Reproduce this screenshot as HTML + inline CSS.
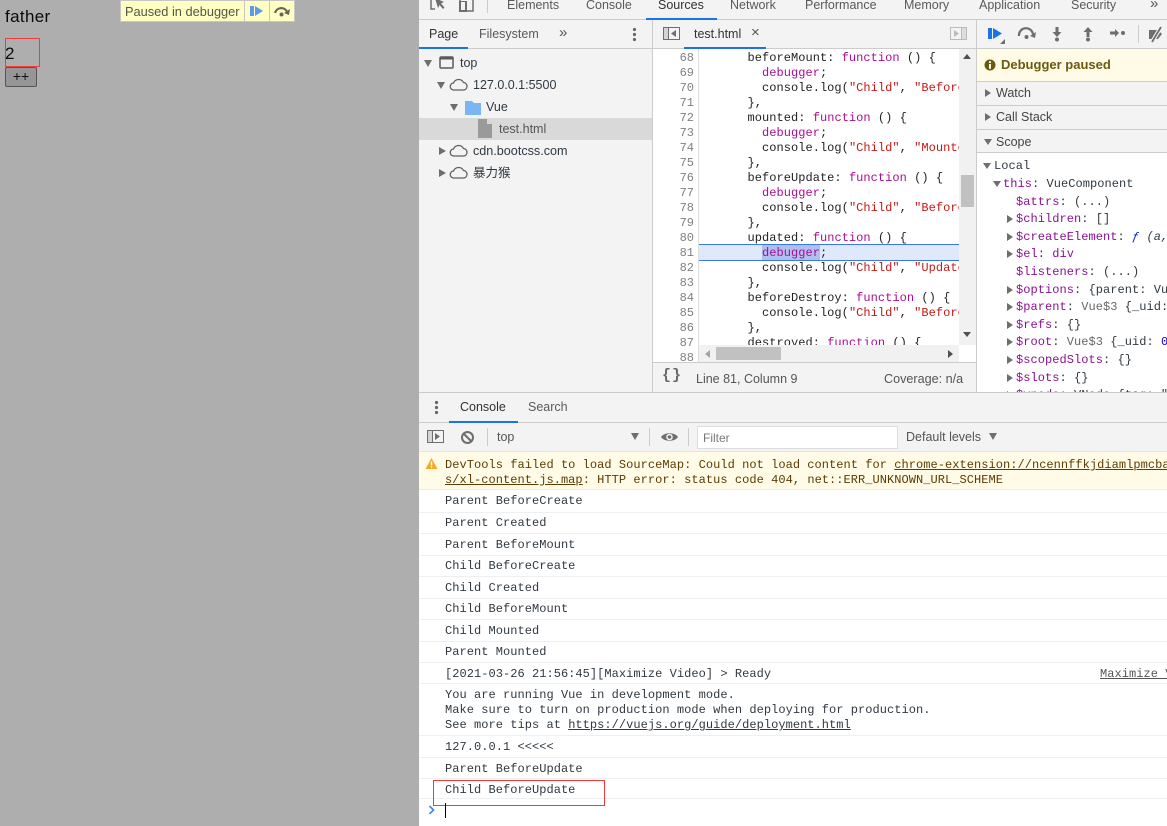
<!DOCTYPE html>
<html><head><meta charset="utf-8">
<style>
html,body{margin:0;padding:0;width:1167px;height:826px;overflow:hidden;background:#fff}
body{position:relative;font-family:"Liberation Sans","Noto Sans CJK SC",sans-serif;font-size:12px;color:#303942}
.a{position:absolute}
.t{position:absolute;white-space:pre;line-height:16px;height:16px}
.m{font-family:"Liberation Mono",monospace;font-size:12px}
.tab{color:#5a5a5a;font-size:12.5px}
.k{color:#aa0d91}.s{color:#c41a16}.p{color:#881391}
.ln{position:absolute;left:653px;width:41px;text-align:right;color:#808080;font-family:"Liberation Mono",monospace;line-height:15px;height:15px}
.c{position:absolute;left:704px;white-space:pre;font-family:"Liberation Mono",monospace;line-height:15px;height:15px;color:#222;letter-spacing:.045px}
.r{position:absolute;left:445px;white-space:pre;font-family:"Liberation Mono",monospace;line-height:16px;color:#303942;letter-spacing:.045px}
.b{position:absolute;left:419px;width:748px;height:1px;background:#efefef}
.ar{position:absolute;width:0;height:0;border-left:4px solid transparent;border-right:4px solid transparent;border-top:7px solid #6e6e6e}
.ac{position:absolute;width:0;height:0;border-top:4px solid transparent;border-bottom:4px solid transparent;border-left:7px solid #6e6e6e}
.v{position:absolute;white-space:pre;font-family:"Liberation Mono",monospace;line-height:16px;color:#303942;letter-spacing:.045px}
u{text-decoration:underline}
</style></head><body>

<!-- page -->
<div class="a" style="left:0;top:0;width:419px;height:826px;background:#aeaeae"></div>
<div class="t" style="left:5px;top:6px;height:22px;line-height:22px;font-size:17px;letter-spacing:.35px;color:#0a0a0a">father</div>
<div class="a" style="left:5px;top:38px;width:33px;height:27px;border:1px solid #f23b3b"></div>
<div class="t" style="left:5px;top:43px;height:22px;line-height:22px;font-size:17px;color:#0a0a0a">2</div>
<div class="a" style="left:5px;top:67px;width:30px;height:18px;border:1px solid #555;border-radius:2px;background:#969696;text-align:center;line-height:17px;font-size:14px;color:#111">++</div>

<div class="a" style="left:120px;top:0;width:175px;height:22px;background:#c6c6c6"></div>
<div class="a" style="left:121px;top:1px;width:123px;height:20px;background:#ffffc4"></div>
<div class="a" style="left:245px;top:1px;width:24px;height:20px;background:#ffffc4"></div>
<div class="a" style="left:270px;top:1px;width:24px;height:20px;background:#ffffc4"></div>
<div class="t" style="left:125px;top:4px;font-size:12.8px;color:#555544">Paused in debugger</div>
<svg class="a" style="left:249px;top:5px" width="16" height="12"><rect x="1" y="1" width="4" height="10" fill="#5c9be8"/><path d="M6 1l8 5-8 5z" fill="#5c9be8"/></svg>
<svg class="a" style="left:273px;top:5px" width="18" height="12"><path d="M2 8a6.500 6.500 0 0 1 12-1.500" fill="none" stroke="#66665a" stroke-width="2.200"/><path d="M17 4l-1 6-5-2z" fill="#66665a"/><circle cx="8.500" cy="9.500" r="2" fill="#66665a"/></svg>

<!-- devtools bg -->
<div class="a" style="left:419px;top:0;width:748px;height:392px;background:#f3f3f3"></div>

<!-- top tabs -->
<div class="a" style="left:419px;top:19px;width:748px;height:1px;background:#ccc"></div>
<svg class="a" style="left:430px;top:0" width="46" height="14"><path d="M1 0v9h4" fill="none" stroke="#6e6e6e" stroke-width="1.500"/><path d="M6 0l3 10 1.500-3 3.500 4 1.500-1.500-3.500-4 3-1.500z" fill="#6e6e6e" transform="translate(-1,-2)"/><rect x="30" y="-3" width="13" height="14" fill="none" stroke="#6e6e6e" stroke-width="1.500"/><rect x="29" y="1" width="8" height="11" fill="#6e6e6e"/><rect x="31" y="2" width="4" height="8" fill="#f3f3f3"/></svg>
<div class="a" style="left:487px;top:0;width:1px;height:13px;background:#ccc"></div>
<div class="t tab" style="left:507px;top:-3px">Elements</div>
<div class="t tab" style="left:586px;top:-3px">Console</div>
<div class="t tab" style="left:658px;top:-3px;color:#333">Sources</div>
<div class="t tab" style="left:730px;top:-3px">Network</div>
<div class="t tab" style="left:805px;top:-3px">Performance</div>
<div class="t tab" style="left:904px;top:-3px">Memory</div>
<div class="t tab" style="left:979px;top:-3px">Application</div>
<div class="t tab" style="left:1071px;top:-3px">Security</div>
<div class="t" style="left:1150px;top:-4px;font-size:15px;color:#555">»</div>
<div class="a" style="left:646px;top:18px;width:71px;height:2px;background:#1a73e8"></div>

<!-- navigator -->
<div class="a" style="left:419px;top:48px;width:748px;height:1px;background:#ccc"></div>
<div class="t tab" style="left:429px;top:26px;color:#333">Page</div>
<div class="t tab" style="left:479px;top:26px">Filesystem</div>
<div class="t" style="left:559px;top:25px;font-size:15px;color:#555">»</div>
<div class="a" style="left:419px;top:47px;width:49px;height:2px;background:#1a73e8"></div>
<svg class="a" style="left:632px;top:27px" width="5" height="15"><circle cx="2.500" cy="2.500" r="1.600" fill="#666"/><circle cx="2.500" cy="7.500" r="1.600" fill="#666"/><circle cx="2.500" cy="12.500" r="1.600" fill="#666"/></svg>

<div class="a" style="left:419px;top:118px;width:233px;height:22px;background:#d9d9d9"></div>
<div class="ar" style="left:424px;top:60px"></div>
<svg class="a" style="left:439px;top:55px" width="16" height="15"><rect x="1" y="2" width="13" height="11" rx="1" fill="none" stroke="#5a5a5a" stroke-width="1.500"/><rect x="1" y="2" width="13" height="2.500" fill="#5a5a5a"/></svg>
<div class="t" style="left:460px;top:55px;font-size:12.500px">top</div>
<div class="ar" style="left:437px;top:82px"></div>
<svg class="a" style="left:449px;top:77px" width="20" height="14"><path d="M5 13a3.500 3.500 0 0 1-.5-7A5.500 5.500 0 0 1 14.500 5.500 3.800 3.800 0 0 1 15 13z" fill="none" stroke="#5f5f5f" stroke-width="1.300"/></svg>
<div class="t" style="left:473px;top:77px;font-size:12.500px">127.0.0.1:5500</div>
<div class="ar" style="left:450px;top:104px"></div>
<svg class="a" style="left:465px;top:100px" width="17" height="15"><path d="M0 1h7l2 2h7v12H0z" fill="#7ab6f4"/></svg>
<div class="t" style="left:486px;top:99px;font-size:12.500px">Vue</div>
<svg class="a" style="left:478px;top:119px" width="14" height="19"><path d="M0 0h9l5 5v14H0z" fill="#9a9a9a"/><path d="M9 0l5 5H9z" fill="#d9d9d9"/></svg>
<div class="t" style="left:499px;top:121px;font-size:12.500px;color:#555">test.html</div>
<div class="ac" style="left:439px;top:147px"></div>
<svg class="a" style="left:449px;top:143px" width="20" height="14"><path d="M5 13a3.500 3.500 0 0 1-.5-7A5.500 5.500 0 0 1 14.500 5.500 3.800 3.800 0 0 1 15 13z" fill="none" stroke="#5f5f5f" stroke-width="1.300"/></svg>
<div class="t" style="left:473px;top:143px;font-size:12.600px">cdn.bootcss.com</div>
<div class="ac" style="left:439px;top:169px"></div>
<svg class="a" style="left:449px;top:165px" width="20" height="14"><path d="M5 13a3.500 3.500 0 0 1-.5-7A5.500 5.500 0 0 1 14.500 5.500 3.800 3.800 0 0 1 15 13z" fill="none" stroke="#5f5f5f" stroke-width="1.300"/></svg>
<div class="t" style="left:473px;top:165px;font-size:12.500px">暴力猴</div>

<!-- editor -->
<div class="a" style="left:652px;top:20px;width:1px;height:372px;background:#ccc"></div>
<svg class="a" style="left:663px;top:26px" width="18" height="15"><rect x=".5" y="1.500" width="16" height="12" fill="none" stroke="#6e6e6e"/><rect x="1" y="2" width="4" height="11" fill="#d5d5d5"/><path d="M5.500 1v13" stroke="#6e6e6e"/><path d="M13 4v7L8 7.500z" fill="#6e6e6e"/></svg>
<div class="t tab" style="left:694px;top:26px;color:#333">test.html</div>
<div class="t" style="left:751px;top:25px;font-size:15px;color:#555">×</div>
<div class="a" style="left:684px;top:47px;width:82px;height:2px;background:#1a73e8"></div>
<svg class="a" style="left:950px;top:26px" width="18" height="15"><rect x=".5" y="1.500" width="16" height="12" fill="none" stroke="#bbb"/><rect x="12" y="2" width="4" height="11" fill="#ddd"/><path d="M11.500 1v13" stroke="#bbb"/><path d="M4 4v7l5-3.500z" fill="#bbb"/></svg>

<div class="a" style="left:653px;top:49px;width:45px;height:313px;background:#fff;border-right:1px solid #ddd"></div>
<div class="a" style="left:699px;top:49px;width:260px;height:313px;background:#fff"></div>

<div class="a" style="left:699px;top:244px;width:260px;height:17px;background:#e0e8fb;box-sizing:border-box;border-top:1px solid #3b78e7;border-bottom:1px solid #3b78e7"></div>
<div class="a" style="left:762px;top:245px;width:58px;height:15px;background:#aebff0"></div>

<div class="ln" style="top:51px">68</div><div class="ln" style="top:66px">69</div><div class="ln" style="top:81px">70</div><div class="ln" style="top:96px">71</div><div class="ln" style="top:111px">72</div><div class="ln" style="top:126px">73</div><div class="ln" style="top:141px">74</div><div class="ln" style="top:156px">75</div><div class="ln" style="top:171px">76</div><div class="ln" style="top:186px">77</div><div class="ln" style="top:201px">78</div><div class="ln" style="top:216px">79</div><div class="ln" style="top:231px">80</div><div class="ln" style="top:246px">81</div><div class="ln" style="top:261px">82</div><div class="ln" style="top:276px">83</div><div class="ln" style="top:291px">84</div><div class="ln" style="top:306px">85</div><div class="ln" style="top:321px">86</div><div class="ln" style="top:336px">87</div><div class="ln" style="top:351px">88</div>

<div class="a" style="left:700px;top:49px;width:259px;height:296px;overflow:hidden">
<div class="c" style="left:4px;top:-13px">      },</div>
<div class="c" style="left:4px;top:2px">      beforeMount: <span class="k">function</span> () {</div>
<div class="c" style="left:4px;top:17px">        <span class="k">debugger</span>;</div>
<div class="c" style="left:4px;top:32px">        console.log(<span class="s">"Child"</span>, <span class="s">"BeforeMount"</span>);</div>
<div class="c" style="left:4px;top:47px">      },</div>
<div class="c" style="left:4px;top:62px">      mounted: <span class="k">function</span> () {</div>
<div class="c" style="left:4px;top:77px">        <span class="k">debugger</span>;</div>
<div class="c" style="left:4px;top:92px">        console.log(<span class="s">"Child"</span>, <span class="s">"Mounted"</span>);</div>
<div class="c" style="left:4px;top:107px">      },</div>
<div class="c" style="left:4px;top:122px">      beforeUpdate: <span class="k">function</span> () {</div>
<div class="c" style="left:4px;top:137px">        <span class="k">debugger</span>;</div>
<div class="c" style="left:4px;top:152px">        console.log(<span class="s">"Child"</span>, <span class="s">"BeforeUpdate"</span>);</div>
<div class="c" style="left:4px;top:167px">      },</div>
<div class="c" style="left:4px;top:182px">      updated: <span class="k">function</span> () {</div>
<div class="c" style="left:4px;top:197px">        <span class="k">debugger</span>;</div>
<div class="c" style="left:4px;top:212px">        console.log(<span class="s">"Child"</span>, <span class="s">"Updated"</span>);</div>
<div class="c" style="left:4px;top:227px">      },</div>
<div class="c" style="left:4px;top:242px">      beforeDestroy: <span class="k">function</span> () {</div>
<div class="c" style="left:4px;top:257px">        console.log(<span class="s">"Child"</span>, <span class="s">"BeforeDestroy"</span>);</div>
<div class="c" style="left:4px;top:272px">      },</div>
<div class="c" style="left:4px;top:287px">      destroyed: <span class="k">function</span> () {</div>
</div>

<!-- scrollbars -->
<div class="a" style="left:959px;top:49px;width:17px;height:296px;background:#f1f1f1"></div>
<div class="a" style="left:961px;top:175px;width:13px;height:32px;background:#c1c1c1"></div>
<div class="a" style="left:963px;top:54px;border-left:4px solid transparent;border-right:4px solid transparent;border-bottom:5px solid #505050"></div>
<div class="a" style="left:963px;top:332px;border-left:4px solid transparent;border-right:4px solid transparent;border-top:5px solid #505050"></div>
<div class="a" style="left:699px;top:345px;width:260px;height:17px;background:#f1f1f1"></div>
<div class="a" style="left:716px;top:347px;width:65px;height:13px;background:#c1c1c1"></div>
<div class="a" style="left:705px;top:350px;border-top:4px solid transparent;border-bottom:4px solid transparent;border-right:5px solid #a3a3a3"></div>
<div class="a" style="left:948px;top:350px;border-top:4px solid transparent;border-bottom:4px solid transparent;border-left:5px solid #505050"></div>
<div class="a" style="left:959px;top:345px;width:17px;height:17px;background:#fff"></div>

<!-- status bar -->
<div class="a" style="left:653px;top:362px;width:323px;height:1px;background:#ccc"></div>
<div class="a" style="left:653px;top:363px;width:323px;height:29px;background:#f3f3f3"></div>
<div class="t m" style="left:662px;top:368px;font-size:15px;font-weight:bold;color:#666;letter-spacing:1px">{}</div>
<div class="t" style="left:696px;top:371px;font-size:12.500px;color:#555">Line 81, Column 9</div>
<div class="t" style="left:884px;top:371px;font-size:12.600px;color:#555">Coverage: n/a</div>

<!-- debugger sidebar -->
<div class="a" style="left:976px;top:20px;width:1px;height:372px;background:#ccc"></div>
<svg class="a" style="left:987px;top:26px" width="20" height="20"><rect x="1" y="2" width="4" height="11" fill="#1a73e8"/><path d="M6 2l9 5.500-9 5.500z" fill="#1a73e8"/><path d="M18 13v5h-5z" fill="#6e6e6e"/></svg>
<svg class="a" style="left:1017px;top:27px" width="20" height="13"><path d="M2 9a7 7 0 0 1 14-1.500" fill="none" stroke="#6e6e6e" stroke-width="2.200"/><path d="M19 5l-1 6-5-2z" fill="#6e6e6e"/><circle cx="9.500" cy="10" r="2" fill="#6e6e6e"/></svg>
<svg class="a" style="left:1051px;top:26px" width="12" height="16"><path d="M4.500 1h3v5h3L6 11 1.500 6h3z" fill="#6e6e6e"/><circle cx="6" cy="13.500" r="2" fill="#6e6e6e"/></svg>
<svg class="a" style="left:1082px;top:26px" width="12" height="16"><path d="M6 1l4.500 5h-3v5h-3V6h-3z" fill="#6e6e6e"/><circle cx="6" cy="13.500" r="2" fill="#6e6e6e"/></svg>
<svg class="a" style="left:1110px;top:28px" width="16" height="10"><path d="M0 3.500h5V1l4 4-4 4V6.500H0z" fill="#6e6e6e"/><circle cx="13" cy="5" r="2" fill="#6e6e6e"/></svg>
<div class="a" style="left:1138px;top:25px;width:1px;height:18px;background:#ccc"></div>
<svg class="a" style="left:1148px;top:26px" width="19" height="17"><path d="M1 4h9l4 4-4 5H1z" fill="#6e6e6e"/><path d="M4 16L13 1" stroke="#f3f3f3" stroke-width="4"/><path d="M4 16L13 1" stroke="#6e6e6e" stroke-width="1.800"/></svg>

<div class="a" style="left:977px;top:49px;width:190px;height:32px;background:#fffbe6"></div>
<div class="a" style="left:977px;top:81px;width:190px;height:1px;background:#ccc"></div>
<svg class="a" style="left:984px;top:59px" width="12" height="12"><circle cx="6" cy="6" r="5.500" fill="#6b5a10"/><rect x="5" y="2.200" width="2" height="1.800" fill="#fffbe6"/><rect x="5" y="5" width="2" height="4.800" fill="#fffbe6"/></svg>
<div class="t" style="left:1001px;top:57px;font-weight:bold;font-size:13px;color:#6b5a10">Debugger paused</div>
<div class="ac" style="left:985px;top:89px;border-left-width:6px"></div>
<div class="t" style="left:996px;top:85px;color:#444;font-size:12.500px">Watch</div>
<div class="a" style="left:977px;top:105px;width:190px;height:1px;background:#ccc"></div>
<div class="ac" style="left:985px;top:113px;border-left-width:6px"></div>
<div class="t" style="left:996px;top:109px;color:#444;font-size:12.500px">Call Stack</div>
<div class="a" style="left:977px;top:129px;width:190px;height:1px;background:#ccc"></div>
<div class="ar" style="left:984px;top:139px;border-top-width:6px"></div>
<div class="t" style="left:996px;top:134px;color:#444;font-size:12.500px">Scope</div>
<div class="a" style="left:977px;top:152px;width:190px;height:1px;background:#ccc"></div>
<div class="a" style="left:977px;top:153px;width:190px;height:239px;background:#fff;overflow:hidden">
<div class="ar" style="left:6px;top:10px;border-top-width:6px"></div>
<div class="v" style="left:17px;top:5px">Local</div>
<div class="ar" style="left:16px;top:28px;border-top-width:6px"></div>
<div class="v" style="left:26px;top:23px"><span class="p">this</span>: VueComponent</div>
<div class="v" style="left:39px;top:41px"><span class="p">$attrs</span>: (...)</div>
<div class="ac" style="left:30px;top:62px;border-left-width:6px"></div><div class="v" style="left:39px;top:58px"><span class="p">$children</span>: []</div>
<div class="ac" style="left:30px;top:80px;border-left-width:6px"></div><div class="v" style="left:39px;top:76px"><span class="p">$createElement</span>: <i style="color:#0d22aa">ƒ</i> <i>(a, b, c, d)</i></div>
<div class="ac" style="left:30px;top:97px;border-left-width:6px"></div><div class="v" style="left:39px;top:93px"><span class="p">$el</span>: <span class="p">div</span></div>
<div class="v" style="left:39px;top:111px"><span class="p">$listeners</span>: (...)</div>
<div class="ac" style="left:30px;top:133px;border-left-width:6px"></div><div class="v" style="left:39px;top:129px"><span class="p">$options</span>: {parent: VueComponent</div>
<div class="ac" style="left:30px;top:150px;border-left-width:6px"></div><div class="v" style="left:39px;top:146px"><span class="p">$parent</span>: <span style="color:#666">Vue$3</span> {_uid: 0</div>
<div class="ac" style="left:30px;top:168px;border-left-width:6px"></div><div class="v" style="left:39px;top:164px"><span class="p">$refs</span>: {}</div>
<div class="ac" style="left:30px;top:185px;border-left-width:6px"></div><div class="v" style="left:39px;top:181px"><span class="p">$root</span>: <span style="color:#666">Vue$3</span> {_uid: <span style="color:#1c00cf">0</span></div>
<div class="ac" style="left:30px;top:203px;border-left-width:6px"></div><div class="v" style="left:39px;top:199px"><span class="p">$scopedSlots</span>: {}</div>
<div class="ac" style="left:30px;top:221px;border-left-width:6px"></div><div class="v" style="left:39px;top:217px"><span class="p">$slots</span>: {}</div>
<div class="ac" style="left:30px;top:238px;border-left-width:6px"></div><div class="v" style="left:39px;top:234px"><span class="p">$vnode</span>: VNode {tag: "</div>
</div>

<!-- console -->
<div class="a" style="left:419px;top:392px;width:748px;height:1px;background:#ccc"></div>
<div class="a" style="left:419px;top:393px;width:748px;height:29px;background:#f3f3f3"></div>
<svg class="a" style="left:434px;top:400px" width="5" height="15"><circle cx="2.500" cy="2.500" r="1.600" fill="#666"/><circle cx="2.500" cy="7.500" r="1.600" fill="#666"/><circle cx="2.500" cy="12.500" r="1.600" fill="#666"/></svg>
<div class="t tab" style="left:460px;top:399px;color:#333">Console</div>
<div class="t tab" style="left:528px;top:399px">Search</div>
<div class="a" style="left:419px;top:422px;width:748px;height:1px;background:#ccc"></div>
<div class="a" style="left:449px;top:421px;width:69px;height:2px;background:#1a73e8"></div>
<div class="a" style="left:419px;top:423px;width:748px;height:28px;background:#f3f3f3"></div>
<svg class="a" style="left:427px;top:429px" width="18" height="15"><rect x=".5" y="1.500" width="16" height="12" fill="none" stroke="#6e6e6e"/><rect x="1" y="2" width="4" height="11" fill="#d5d5d5"/><path d="M5.500 1v13" stroke="#6e6e6e"/><path d="M8 4v7l5-3.500z" fill="#6e6e6e"/></svg>
<svg class="a" style="left:460px;top:430px" width="15" height="15"><circle cx="7.500" cy="7.500" r="5.500" fill="none" stroke="#6e6e6e" stroke-width="2"/><path d="M3.500 3.500l8 8" stroke="#6e6e6e" stroke-width="2"/></svg>
<div class="a" style="left:487px;top:428px;width:1px;height:18px;background:#ccc"></div>
<div class="t" style="left:497px;top:429px;color:#555;font-size:12.500px">top</div>
<div class="ar" style="left:631px;top:433px;border-top-width:7px"></div>
<div class="a" style="left:649px;top:428px;width:1px;height:18px;background:#ccc"></div>
<svg class="a" style="left:660px;top:430px" width="19" height="14"><path d="M1 7C4 2 15 2 18 7 15 12 4 12 1 7z" fill="#6e6e6e"/><circle cx="9.500" cy="7" r="3.300" fill="#f3f3f3"/><circle cx="9.500" cy="7" r="1.800" fill="#6e6e6e"/></svg>
<div class="a" style="left:688px;top:428px;width:1px;height:18px;background:#ccc"></div>
<div class="a" style="left:697px;top:426px;width:199px;height:21px;background:#fff;border:1px solid #ddd"></div>
<div class="t" style="left:703px;top:430px;color:#777">Filter</div>
<div class="t" style="left:906px;top:429px;color:#555;font-size:12.500px">Default levels</div>
<div class="ar" style="left:989px;top:433px;border-top-width:7px"></div>

<div class="a" style="left:419px;top:451px;width:748px;height:1px;background:#f0e6b8"></div>
<div class="a" style="left:419px;top:452px;width:748px;height:37px;background:#fffbe6;border-bottom:1px solid #f5efc8"></div>
<svg class="a" style="left:425px;top:457px" width="13" height="13"><path d="M6.500 1L12.500 12H.5z" fill="#f2ab26"/><rect x="5.800" y="4.500" width="1.400" height="4" fill="#fff"/><rect x="5.800" y="9.300" width="1.400" height="1.400" fill="#fff"/></svg>
<div class="r" style="top:457px;color:#5c3c00;height:16px;width:722px;overflow:hidden">DevTools failed to load SourceMap: Could not load content for <u>chrome-extension://ncennffkjdiamlpmcbajkmaiiiddgioo/j</u></div>
<div class="r" style="top:472px;color:#5c3c00"><u>s/xl-content.js.map</u>: HTTP error: status code 404, net::ERR_UNKNOWN_URL_SCHEME</div>

<div class="r" style="top:493px">Parent BeforeCreate</div><div class="b" style="top:512px"></div>
<div class="r" style="top:515px">Parent Created</div><div class="b" style="top:533px"></div>
<div class="r" style="top:537px">Parent BeforeMount</div><div class="b" style="top:555px"></div>
<div class="r" style="top:558px">Child BeforeCreate</div><div class="b" style="top:576px"></div>
<div class="r" style="top:580px">Child Created</div><div class="b" style="top:598px"></div>
<div class="r" style="top:601px">Child BeforeMount</div><div class="b" style="top:619px"></div>
<div class="r" style="top:623px">Child Mounted</div><div class="b" style="top:641px"></div>
<div class="r" style="top:644px">Parent Mounted</div><div class="b" style="top:662px"></div>
<div class="r" style="top:666px">[2021-03-26 21:56:45][Maximize Video] &gt; Ready</div>
<div class="r" style="left:1100px;top:666px;color:#555;width:67px;overflow:hidden"><u>Maximize Video</u></div><div class="b" style="top:683px"></div>
<div class="r" style="top:688px;line-height:15px">You are running Vue in development mode.
Make sure to turn on production mode when deploying for production.
See more tips at <u>https://vuejs.org/guide/deployment.html</u></div><div class="b" style="top:735px"></div>
<div class="r" style="top:739px">127.0.0.1 &lt;&lt;&lt;&lt;&lt;</div><div class="b" style="top:757px"></div>
<div class="r" style="top:761px">Parent BeforeUpdate</div><div class="b" style="top:778px"></div>
<div class="r" style="top:782px">Child BeforeUpdate</div><div class="b" style="top:798px"></div>
<div class="a" style="left:433px;top:780px;width:170px;height:24px;border:1px solid #f23b3b"></div>
<svg class="a" style="left:428px;top:805px" width="8" height="10"><path d="M1.500 1l4 4-4 4" fill="none" stroke="#3b86e8" stroke-width="1.600"/></svg>
<div class="a" style="left:445px;top:803px;width:1px;height:15px;background:#000"></div>
</body></html>
